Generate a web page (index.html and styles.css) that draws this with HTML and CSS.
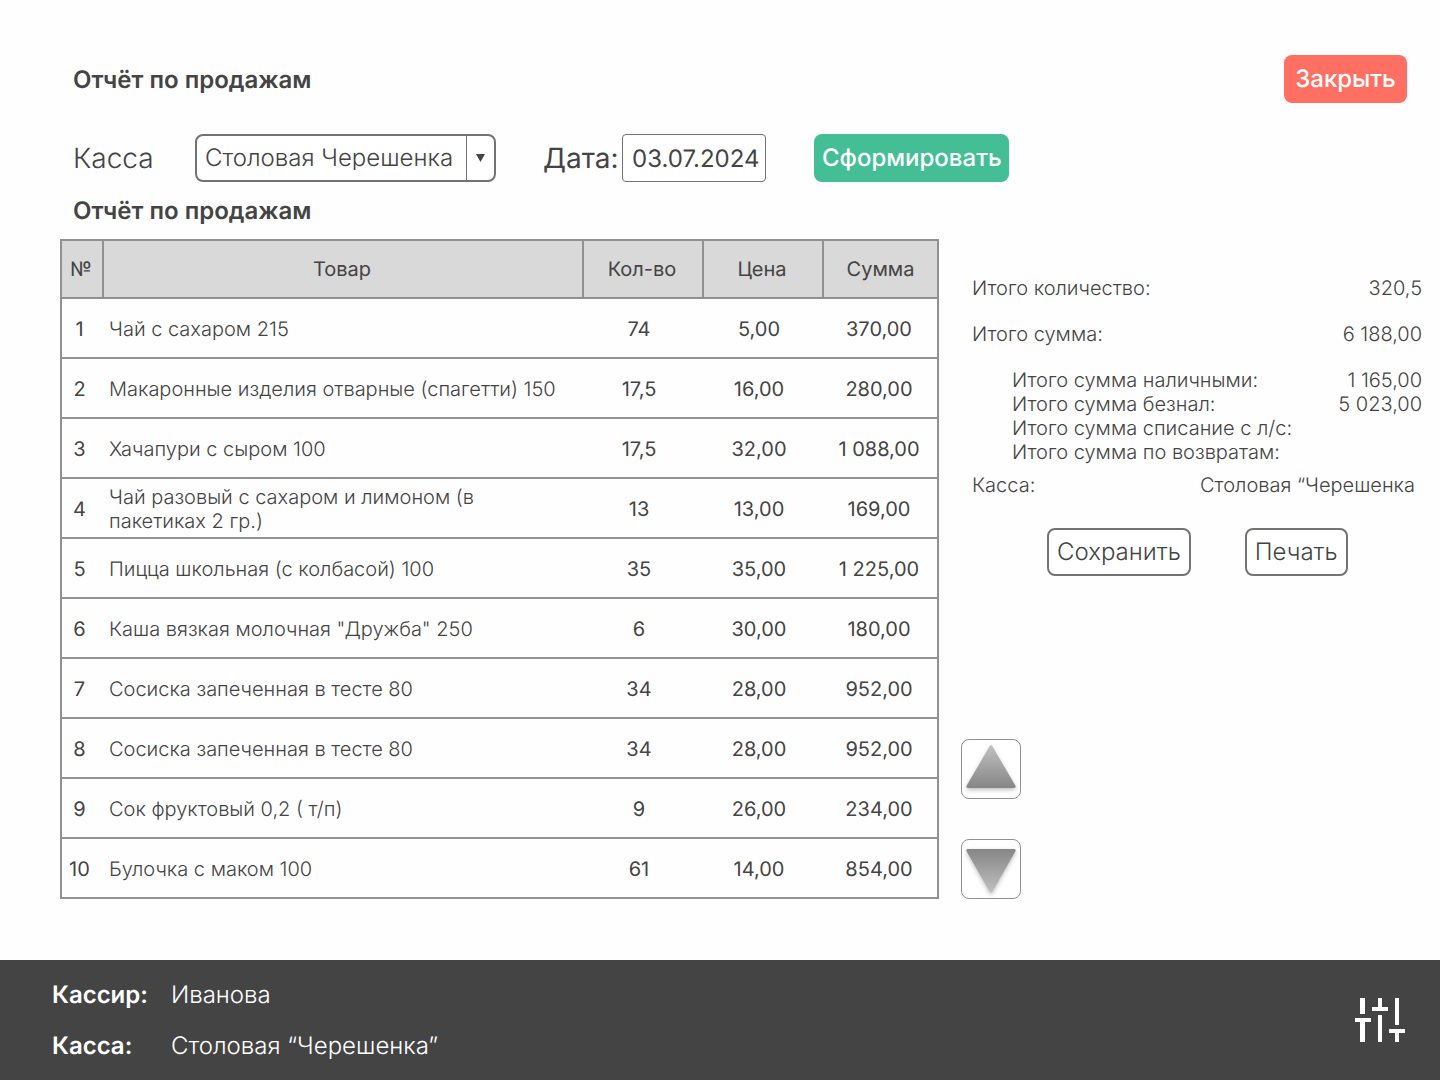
FILE: index.html
```html
<!DOCTYPE html>
<html lang="ru">
<head>
<meta charset="utf-8">
<meta name="viewport" content="width=device-width, initial-scale=1">
<title>Отчёт по продажам</title>
<link rel="stylesheet" href="styles.css">
</head>
<body>
<header class="topbar">
  <h1 class="title">Отчёт по продажам</h1>
  <button type="button" class="btn btn-close">Закрыть</button>
</header>

<main class="content">
  <form class="filters">
    <label class="filter-label filter-label-desk" for="desk">Касса</label>
    <div class="select">
      <select id="desk" class="select-field">
        <option>Столовая Черешенка</option>
      </select>
      <span class="select-arrow" aria-hidden="true">
        <svg width="9" height="8" viewBox="0 0 9 8"><path d="M0 0h9L4.500 8z" fill="currentColor"/></svg>
      </span>
    </div>
    <label class="filter-label filter-label-date" for="date">Дата:</label>
    <input id="date" class="date-field" type="text" value="03.07.2024">
    <button type="button" class="btn btn-build">Сформировать</button>
  </form>

  <h2 class="title report-title">Отчёт по продажам</h2>

  <div class="report">
    <table class="sales">
      <colgroup>
        <col class="col-num">
        <col>
        <col class="col-qty">
        <col class="col-price">
        <col class="col-sum">
      </colgroup>
      <thead>
        <tr><th scope="col">№</th><th scope="col">Товар</th><th scope="col">Кол-во</th><th scope="col">Цена</th><th scope="col">Сумма</th></tr>
      </thead>
      <tbody>
        <tr><td>1</td><td class="name">Чай с сахаром 215</td><td>74</td><td>5,00</td><td>370,00</td></tr>
        <tr><td>2</td><td class="name">Макаронные изделия отварные (спагетти) 150</td><td>17,5</td><td>16,00</td><td>280,00</td></tr>
        <tr><td>3</td><td class="name">Хачапури с сыром 100</td><td>17,5</td><td>32,00</td><td>1 088,00</td></tr>
        <tr><td>4</td><td class="name">Чай разовый с сахаром и лимоном (в пакетиках 2 гр.)</td><td>13</td><td>13,00</td><td>169,00</td></tr>
        <tr><td>5</td><td class="name">Пицца школьная (с колбасой) 100</td><td>35</td><td>35,00</td><td>1 225,00</td></tr>
        <tr><td>6</td><td class="name">Каша вязкая молочная "Дружба" 250</td><td>6</td><td>30,00</td><td>180,00</td></tr>
        <tr><td>7</td><td class="name">Сосиска запеченная в тесте 80</td><td>34</td><td>28,00</td><td>952,00</td></tr>
        <tr><td>8</td><td class="name">Сосиска запеченная в тесте 80</td><td>34</td><td>28,00</td><td>952,00</td></tr>
        <tr><td>9</td><td class="name">Сок фруктовый 0,2 ( т/п)</td><td>9</td><td>26,00</td><td>234,00</td></tr>
        <tr><td>10</td><td class="name">Булочка с маком 100</td><td>61</td><td>14,00</td><td>854,00</td></tr>
      </tbody>
    </table>

    <aside class="side">
      <dl class="totals">
        <div class="total"><dt>Итого количество:</dt><dd>320,5</dd></div>
        <div class="total"><dt>Итого сумма:</dt><dd>6 188,00</dd></div>
      </dl>
      <dl class="breakdown">
        <div class="total"><dt>Итого сумма наличными:</dt><dd>1 165,00</dd></div>
        <div class="total"><dt>Итого сумма безнал:</dt><dd>5 023,00</dd></div>
        <div class="total"><dt>Итого сумма списание с л/с:</dt><dd></dd></div>
        <div class="total"><dt>Итого сумма по возвратам:</dt><dd></dd></div>
      </dl>
      <dl class="desk">
        <div class="total"><dt>Касса:</dt><dd>Столовая “Черешенка</dd></div>
      </dl>
      <div class="actions">
        <button type="button" class="btn btn-outline">Сохранить</button>
        <button type="button" class="btn btn-outline">Печать</button>
      </div>
      <div class="scroll">
        <button type="button" class="scroll-btn" aria-label="Вверх">
          <svg class="arrow" width="58" height="58" viewBox="0 0 58 58">
            <defs><linearGradient id="up" x1="0" y1="0" x2="0" y2="1"><stop offset="0" stop-color="#c0c0c0"/><stop offset="1" stop-color="#868686"/></linearGradient></defs>
            <path d="M27.500 6.500Q29 4 30.500 6.500L53.300 45.500Q54.500 48 52 48H6Q3.500 48 4.700 45.500Z" fill="url(#up)"/>
          </svg>
        </button>
        <button type="button" class="scroll-btn" aria-label="Вниз">
          <svg class="arrow" width="58" height="58" viewBox="0 0 58 58">
            <defs><linearGradient id="down" x1="0" y1="0" x2="0" y2="1"><stop offset="0" stop-color="#868686"/><stop offset="1" stop-color="#c0c0c0"/></linearGradient></defs>
            <path d="M27.500 51.500Q29 54 30.500 51.500L53.300 11.500Q54.500 9 52 9H6Q3.500 9 4.700 11.500Z" fill="url(#down)"/>
          </svg>
        </button>
      </div>
    </aside>
  </div>
</main>

<footer class="statusbar">
  <dl class="status">
    <dt>Кассир:</dt><dd>Иванова</dd>
    <dt>Касса:</dt><dd>Столовая “Черешенка”</dd>
  </dl>
  <button type="button" class="settings" aria-label="Настройки">
    <svg width="50" height="44" viewBox="0 0 50 44" fill="#fff">
      <path d="M5 0h5v16H5zM0 20h16v4h-6v20H5V24H0zM23 0h4v9h6v4H17V9h6zM23 17h4v27h-4zM40 0h4v27h-4zM34 31h16v4h-6v9h-4v-9h-6z"/>
    </svg>
  </button>
</footer>
</body>
</html>
```
FILE: styles.css
```css
* {
  box-sizing: border-box;
}

body {
  display: flex;
  flex-direction: column;
  min-height: 100vh;
  margin: 0;
  background: #fefefe;
  color: #444;
  font: 300 20px/24px Inter, sans-serif;
  text-rendering: geometricPrecision;
}

h1, h2, dl, dd {
  margin: 0;
}

button, input, select {
  font: inherit;
  color: inherit;
  text-rendering: inherit;
}

button {
  cursor: pointer;
}

.topbar {
  display: flex;
  align-items: center;
  justify-content: space-between;
  padding: 55px 33px 0 73px;
}

.title {
  font-size: 24px;
  font-weight: 600;
  line-height: 32px;
}

.topbar .title {
  padding-top: 2px;
}

.btn {
  height: 48px;
  padding: 0 8px;
  border: 0;
  border-radius: 8px;
  font-size: 24px;
  white-space: nowrap;
}

.btn-close {
  width: 123px;
  background: #ff7062;
  color: #fff;
  font-weight: 500;
}

.btn-build {
  width: 195px;
  background: #44bf95;
  color: #fff;
  font-weight: 500;
}

.btn-outline {
  border: 2px solid #737373;
  background: #fff;
}

.content {
  flex: 1;
  padding: 31px 18px 32px 60px;
}

.filters {
  display: flex;
  align-items: center;
  padding-left: 13px;
}

.filter-label {
  font-size: 28px;
}

.filter-label-desk {
  width: 122px;
}

.filter-label-date {
  width: 79px;
  margin-left: 47px;
  font-weight: 400;
}

.select {
  position: relative;
  width: 301px;
}

.select-field {
  display: block;
  width: 100%;
  height: 48px;
  padding: 0 32px 0 8px;
  border: 2px solid #737373;
  border-radius: 8px;
  background: #fff;
  font-size: 24px;
  appearance: none;
}

.select-arrow {
  position: absolute;
  top: 2px;
  right: 2px;
  bottom: 2px;
  display: flex;
  align-items: center;
  justify-content: center;
  width: 28px;
  border-left: 1px solid #737373;
  pointer-events: none;
}

.date-field {
  width: 144px;
  height: 48px;
  margin-right: 48px;
  padding: 0 0 0 9px;
  border: 1px solid #737373;
  border-radius: 4px;
  background: #fff;
  font-size: 24px;
  font-weight: 400;
}

.report-title {
  padding: 13px 13px 12px;
}

.report {
  display: grid;
  grid-template-columns: minmax(0, 1fr) 461px;
  column-gap: 22px;
}

.sales {
  width: 100%;
  border: 2px solid #919191;
  border-collapse: collapse;
  table-layout: fixed;
  font-weight: 400;
  text-align: center;
}

.col-num {
  width: 42px;
}

.col-qty,
.col-price {
  width: 120px;
}

.col-sum {
  width: 115px;
}

.sales th {
  height: 58px;
  padding: 0 2px 0 0;
  border: 2px solid #919191;
  background: #d9d9d9;
  font-weight: 400;
}

.sales th:last-child {
  padding-right: 0;
}

.sales td {
  height: 60px;
  padding: 2px 8px 0 0;
  border-bottom: 2px solid #919191;
}

.sales td:first-child {
  padding-right: 6px;
}

.sales td:last-child {
  padding-right: 2px;
}

.sales .name {
  padding: 2px 16px 0 6px;
  font-weight: 300;
  text-align: left;
}

.side {
  display: flex;
  flex-direction: column;
  padding-top: 37px;
}

.total {
  display: flex;
  justify-content: space-between;
}

.totals,
.breakdown,
.desk {
  padding-left: 11px;
}

.totals .total {
  margin-bottom: 22px;
}

.breakdown {
  padding-left: 51px;
}

.desk {
  padding: 9px 7px 31px 11px;
}

.actions {
  display: flex;
  gap: 54px;
  padding-left: 86px;
}

.scroll {
  display: flex;
  flex-direction: column;
  gap: 40px;
  margin-top: auto;
}

.scroll-btn {
  width: 60px;
  height: 60px;
  padding: 0;
  border: 1px solid #919191;
  border-radius: 8px;
  background: #fff;
}

.arrow {
  display: block;
  filter: drop-shadow(0 2px 2px rgba(0, 0, 0, 0.25));
}

.statusbar {
  display: flex;
  align-items: center;
  justify-content: space-between;
  min-height: 120px;
  padding: 0 35px 0 52px;
  background: #444;
  color: #fff;
}

.status {
  display: grid;
  grid-template-columns: 119px auto;
  row-gap: 19px;
  font-size: 24px;
  line-height: 32px;
}

.status dt {
  font-weight: 600;
}

.settings {
  padding: 0;
  border: 0;
  background: none;
}

.settings svg {
  display: block;
}
```
